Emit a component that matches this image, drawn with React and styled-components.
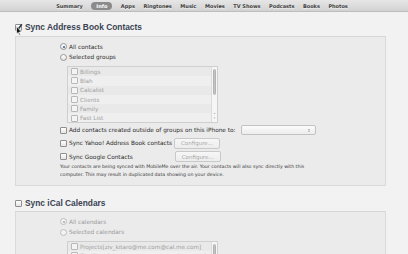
import React from 'react'
import styled, { createGlobalStyle } from 'styled-components'

const GlobalStyle = createGlobalStyle`
  body {
    margin: 0;
    background: #f2f2f2;
    font-family: 'DejaVu Sans', 'Liberation Sans', sans-serif;
    color: #333;
  }
`

const Page = styled.div`
  position: relative;
  width: 408px;
  height: 254px;
  overflow: hidden;
`

const TabBar = styled.div`
  height: 12px;
  display: flex;
  align-items: center;
  justify-content: center;
  gap: 8.5px;
  padding-right: 4px;
  background: linear-gradient(#e6e6e6, #d2d2d2);
  border-bottom: 1px solid #bdbdbd;
  box-sizing: border-box;
`

const Tab = styled.span`
  font-size: 5px;
  font-weight: bold;
  color: ${p => (p.active ? '#fff' : '#3d3d3d')};
  background: ${p => (p.active ? '#8b8b8b' : 'transparent')};
  border-radius: 5px;
  padding: ${p => (p.active ? '1px 5px' : '0')};
  line-height: 6px;
  text-shadow: ${p => (p.active ? 'none' : '0 1px 0 rgba(255,255,255,0.6)')};
`

const Content = styled.div`
  padding: 0 22px 0 15px;
`

const SectionTitle = styled.div`
  display: flex;
  align-items: center;
  gap: 1px;
  height: 12px;
  margin-top: ${p => p.top}px;
  font-family: 'Liberation Sans', Arial, sans-serif;
  font-size: 8.4px;
  font-weight: bold;
  color: #3a4352;
`

const Box = styled.span`
  display: inline-block;
  width: 5px;
  height: 5px;
  border: 1px solid ${p => (p.dim ? '#b8b8b8' : '#8f8f8f')};
  border-radius: 1px;
  background: ${p => (p.dim ? '#f4f4f4' : 'linear-gradient(#ffffff, #e4e4e4)')};
  flex: none;
  position: relative;
  margin-right: 2px;
`

const CheckMark = styled.svg`
  position: absolute;
  left: -1px;
  top: -2px;
`

const Radio = styled.span`
  display: inline-block;
  width: 5px;
  height: 5px;
  border: 1px solid ${p => (p.dim ? '#bdbdbd' : '#959595')};
  border-radius: 50%;
  background: ${p => (p.dim ? '#f3f3f3' : 'linear-gradient(#ffffff, #e2e2e2)')};
  flex: none;
  margin-right: 2px;
  position: relative;
  &::after {
    content: '';
    display: ${p => (p.on ? 'block' : 'none')};
    position: absolute;
    left: 1.5px;
    top: 1.5px;
    width: 2px;
    height: 2px;
    border-radius: 50%;
    background: ${p => (p.dim ? '#aaa' : '#3c5f9a')};
  }
`

const Panel = styled.div`
  margin-top: ${p => p.top || 0}px;
  background: #ebebeb;
  border: 1px solid #dadada;
  border-top-color: #d6d6d6;
  padding: 4px 0 6px 44px;
  height: ${p => p.h}px;
  box-sizing: border-box;
`

const Row = styled.div`
  display: flex;
  align-items: center;
  height: ${p => p.h || 10}px;
  font-size: 5.8px;
  color: ${p => (p.dim ? '#9a9a9a' : '#2b2b2b')};
  white-space: nowrap;
`

const ListBox = styled.div`
  margin: 4px 0 1px 7px;
  width: 151px;
  height: 57px;
  border: 1px solid #cfcfcf;
  box-sizing: border-box;
  display: flex;
  background: #f3f3f3;
  overflow: hidden;
`

const ListItems = styled.div`
  flex: 1;
`

const ListRow = styled.div`
  display: flex;
  align-items: center;
  height: 9.3px;
  padding-left: 3px;
  font-size: 5.7px;
  color: #a0a0a0;
  background: ${p => (p.odd ? '#e9e9e9' : '#efefef')};
  white-space: nowrap;
`

const ScrollTrack = styled.div`
  width: 6px;
  border-left: 1px solid #dcdcdc;
  background: #f6f6f6;
  display: flex;
  flex-direction: column;
  align-items: center;
  padding-top: 2px;
  box-sizing: border-box;
`

const Thumb = styled.div`
  width: 3px;
  height: 26px;
  border-radius: 2px;
  background: #c4c4c4;
  border: 1px solid #b3b3b3;
  box-sizing: border-box;
`

const Arrows = styled.div`
  margin-top: auto;
  font-size: 3px;
  line-height: 5px;
  color: #aaa;
  text-align: center;
  padding-bottom: 1px;
`

const Select = styled.div`
  margin-left: 5px;
  width: 75px;
  height: 10px;
  border: 1px solid #c2c2c2;
  border-radius: 2px;
  background: linear-gradient(#fbfbfb, #ececec);
  box-sizing: border-box;
  display: flex;
  align-items: center;
  justify-content: flex-end;
  padding-right: 4px;
  font-size: 4px;
  color: #888;
`

const Button = styled.span`
  margin-left: ${p => p.ml}px;
  width: 46px;
  height: 11px;
  border: 1px solid #c9c9c9;
  border-radius: 2px;
  background: linear-gradient(#f7f7f7, #ececec);
  box-sizing: border-box;
  display: flex;
  align-items: center;
  justify-content: center;
  font-size: 5.5px;
  color: #a8a8a8;
`

const Note = styled.div`
  font-size: 4.7px;
  line-height: 8px;
  color: #333;
`

const Cursor = styled.svg`
  position: absolute;
  left: 16px;
  top: 26px;
`

const Check = () => (
  <CheckMark width="8" height="8" viewBox="0 0 8 8">
    <path d="M1.5 4.2 L3.2 6.2 L6.8 1.2" fill="none" stroke="#2d3640" strokeWidth="1.5" />
  </CheckMark>
)

const tabs = ['Summary', 'Info', 'Apps', 'Ringtones', 'Music', 'Movies', 'TV Shows', 'Podcasts', 'Books', 'Photos']
const groups = ['Billings', 'Blah', 'Calcalist', 'Clients', 'Family', 'Fast List']

const App = () => (
  <Page>
    <GlobalStyle />
    <TabBar>
      {tabs.map(t => (
        <Tab key={t} active={t === 'Info'}>{t}</Tab>
      ))}
    </TabBar>
    <Content>
      <SectionTitle top={9}>
        <Box><Check /></Box>
        Sync Address Book Contacts
      </SectionTitle>
      <Panel top={3} h={150}>
        <Row h={11}><Radio on />All contacts</Row>
        <Row h={10}><Radio />Selected groups</Row>
        <ListBox>
          <ListItems>
            {groups.map((g, i) => (
              <ListRow key={g} odd={i % 2 === 0}><Box dim />{g}</ListRow>
            ))}
          </ListItems>
          <ScrollTrack>
            <Thumb />
            <Arrows>▴<br />▾</Arrows>
          </ScrollTrack>
        </ListBox>
        <Row h={12}>
          <Box />Add contacts created outside of groups on this iPhone to:
          <Select>⇕</Select>
        </Row>
        <Row h={14}>
          <Box />Sync Yahoo! Address Book contacts
          <Button ml={2}>Configure...</Button>
        </Row>
        <Row h={13}>
          <Box />Sync Google Contacts
          <Button ml={42}>Configure...</Button>
        </Row>
        <Note>
          Your contacts are being synced with MobileMe over the air. Your contacts will also sync directly with this<br />
          computer. This may result in duplicated data showing on your device.
        </Note>
      </Panel>
      <SectionTitle top={11}>
        <Box />
        Sync iCal Calendars
      </SectionTitle>
      <Panel top={2} h={60}>
        <Row h={11} dim><Radio on dim />All calendars</Row>
        <Row h={10} dim><Radio dim />Selected calendars</Row>
        <ListBox>
          <ListItems>
            <ListRow odd><Box dim />Projects[ziv_kitaro@me.com@cal.me.com]</ListRow>
            <ListRow><Box dim />Ziv Kitaro[ziv_kitaro@me.com@cal.me.com]</ListRow>
          </ListItems>
          <ScrollTrack>
            <Thumb />
          </ScrollTrack>
        </ListBox>
      </Panel>
    </Content>
    <Cursor width="6" height="10" viewBox="0 0 6 10">
      <path d="M0.5 0.5 L0.5 8 L2.2 6.4 L3.4 9.3 L4.4 8.9 L3.3 6 L5.5 6 Z" fill="#111" stroke="#fff" strokeWidth="0.7" />
    </Cursor>
  </Page>
)

export default App
